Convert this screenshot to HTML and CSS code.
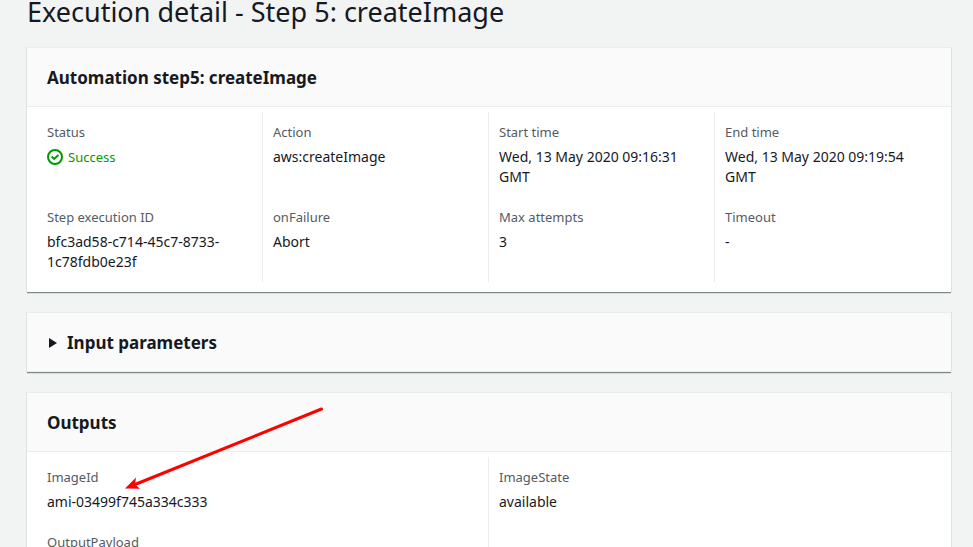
FILE: index.html
```html
<!DOCTYPE html>
<html lang="en">
<head>
<meta charset="utf-8">
<title>Execution detail - Step 5: createImage</title>
<link rel="stylesheet" href="styles.css">
</head>
<body>
<main class="page">
  <h1 class="page-title">Execution detail - Step 5: createImage</h1>

  <section class="card">
    <header class="card-header"><h2>Automation step5: createImage</h2></header>
    <dl class="fields four">
      <div class="field"><dt>Status</dt><dd class="success"><svg class="status-icon" viewBox="0 0 16 16" aria-hidden="true"><circle cx="8" cy="8" r="7"/><path d="M4.600 7.600 7.200 10 11.400 6"/></svg>Success</dd></div>
      <div class="field"><dt>Action</dt><dd>aws:createImage</dd></div>
      <div class="field"><dt>Start time</dt><dd>Wed, 13 May 2020 09:16:31 GMT</dd></div>
      <div class="field"><dt>End time</dt><dd>Wed, 13 May 2020 09:19:54 GMT</dd></div>
      <div class="field"><dt>Step execution ID</dt><dd>bfc3ad58-c714-45c7-8733-1c78fdb0e23f</dd></div>
      <div class="field"><dt>onFailure</dt><dd>Abort</dd></div>
      <div class="field"><dt>Max attempts</dt><dd>3</dd></div>
      <div class="field"><dt>Timeout</dt><dd>-</dd></div>
    </dl>
  </section>

  <section class="card">
    <h2><button type="button" class="card-header toggle" aria-expanded="false"><svg class="caret" viewBox="0 0 10 12" aria-hidden="true"><path d="M2 1v10l8-5z"/></svg>Input parameters</button></h2>
  </section>

  <section class="card">
    <header class="card-header"><h2>Outputs</h2></header>
    <dl class="fields two">
      <div class="field"><dt>ImageId</dt><dd>ami-03499f745a334c333</dd></div>
      <div class="field"><dt>ImageState</dt><dd>available</dd></div>
      <div class="field"><dt>OutputPayload</dt></div>
    </dl>
    <svg class="arrow" viewBox="0 0 200 84" aria-hidden="true"><path class="shaft" d="M196.500 2 10 77.500"/><path class="head" d="M0 81.500 11 70.500 10 77.500 15 81.800z"/></svg>
  </section>
</main>
</body>
</html>
```
FILE: styles.css
```css
* { box-sizing: border-box; }
html { overflow: hidden; }
body {
  margin: 0;
  background: #f2f3f3;
  color: #16191f;
  font-family: "Noto Sans", sans-serif;
  font-size: 14px;
  line-height: 20px;
}
.page { padding: 0 22px 0 27px; }
h1, h2, dl, dd { margin: 0; }
.page-title {
  margin-top: -6px;
  margin-bottom: 17px;
  font-size: 27px;
  line-height: 36px;
  font-weight: 400;
}
.card {
  position: relative;
  margin-bottom: 20px;
  background: #fff;
  border-top: 1px solid #eaeded;
  box-shadow: 0 1px 0 #7b898b, 0 2px 0 #d8dddd, -1px 0 0 #dfe2e2, 1px 0 0 #dfe2e2;
}
.card-header {
  padding: 19px 20px 17px;
  background: #fafafa;
  border-bottom: 1px solid #eaeded;
}
h2, .toggle {
  font-size: 17px;
  line-height: 22px;
  font-weight: 700;
}
.toggle {
  display: flex;
  align-items: center;
  gap: 10px;
  width: 100%;
  border-width: 0 0 1px;
  color: inherit;
  font-family: inherit;
  text-align: left;
}
.caret { width: 10px; height: 12px; fill: #16191f; }
.fields { display: grid; padding: 5px 10px 10px; }
.four { grid-template-columns: repeat(4, 1fr); }
.two { grid-template-columns: repeat(2, 1fr); }
.field { padding: 10px; border-right: 1px solid #eaeded; }
.four .field:nth-child(4n), .two .field:nth-child(2n) { border-right: 0; }
dt { margin-bottom: 5px; color: #545b64; }
dt, .success { font-size: 13px; }
.success { display: flex; align-items: center; gap: 5px; color: #090; }
.status-icon { width: 16px; height: 16px; fill: none; stroke: currentColor; stroke-width: 2; }
.arrow { position: absolute; left: 98px; top: 14px; width: 200px; height: 84px; fill: #f00; }
.shaft { stroke: #f00; stroke-width: 3; stroke-linecap: round; }
```
